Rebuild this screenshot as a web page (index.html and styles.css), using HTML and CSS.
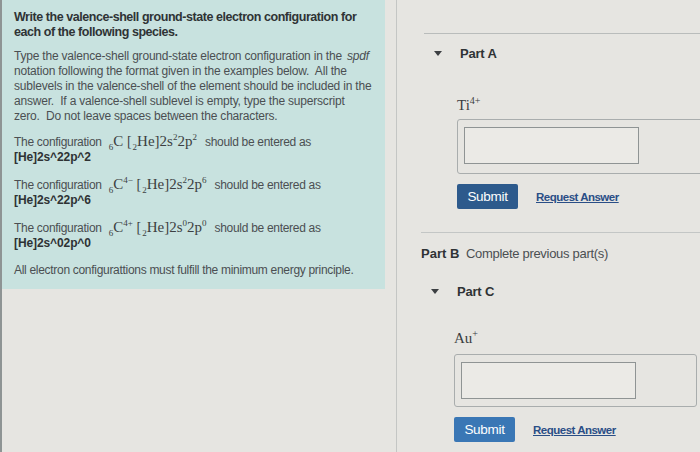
FILE: index.html
```html
<!DOCTYPE html>
<html lang="en">
<head>
    <meta charset="UTF-8">
    <title>Electron Configuration</title>
    <link rel="stylesheet" href="styles.css">
</head>
<body>
    <div class="page">
        <!-- left: instructions -->
        <div class="left-col">
            <div class="intro">
                <div class="intro-title">Write the valence-shell ground-state electron configuration for each of the following species.</div>
                <p class="intro-text">Type the valence-shell ground-state electron configuration in the <i>spdf</i><br>notation following the format given in the examples below.&nbsp; All the<br>sublevels in the valence-shell of the element should be included in the<br>answer.&nbsp; If a valence-shell sublevel is empty, type the superscript<br>zero.&nbsp; Do not leave spaces between the characters.</p>
                <p class="example">The configuration <span class="chem"><sub>6</sub>C <span class="br">[</span><sub>2</sub>He]2s<sup>2</sup>2p<sup>2</sup></span> should be entered as<br><b>[He]2s^22p^2</b></p>
                <p class="example">The configuration <span class="chem"><sub>6</sub>C<sup>4&minus;</sup> <span class="br">[</span><sub>2</sub>He]2s<sup>2</sup>2p<sup>6</sup></span> should be entered as<br><b>[He]2s^22p^6</b></p>
                <p class="example">The configuration <span class="chem"><sub>6</sub>C<sup>4+</sup> <span class="br">[</span><sub>2</sub>He]2s<sup>0</sup>2p<sup>0</sup></span> should be entered as<br><b>[He]2s^02p^0</b></p>
                <p class="intro-last">All electron configurattions must fulfill the minimum energy principle.</p>
            </div>
        </div>

        <!-- right: parts -->
        <div class="parts">
            <div class="part part-a">
                <div class="part-head"><span class="caret"></span>Part A</div>
                <div class="part-body">
                    <div class="species">Ti<sup>4+</sup></div>
                    <div class="answer-box"><div class="answer-input"></div></div>
                    <div class="actions">
                        <button class="submit dark">Submit</button>
                        <a class="request" href="#">Request Answer</a>
                    </div>
                </div>
            </div>
            <div class="part-b"><b>Part B</b> <span>Complete previous part(s)</span></div>
            <div class="part part-c">
                <div class="part-head"><span class="caret"></span>Part C</div>
                <div class="part-body">
                    <div class="species">Au<sup>+</sup></div>
                    <div class="answer-box"><div class="answer-input"></div></div>
                    <div class="actions">
                        <button class="submit">Submit</button>
                        <a class="request" href="#">Request Answer</a>
                    </div>
                </div>
            </div>
        </div>
    </div>
</body>
</html>
```

FILE: styles.css
```css
body {
    margin: 0;
    width: 700px;
    height: 452px;
    overflow: hidden;
    background: #e6e5e1;
    font-family: 'Liberation Sans', Arial, sans-serif;
    color: #3a3d3f;
}

.page {
    display: flex;
    height: 452px;
    border-left: 2px solid #8e9494;
    box-sizing: border-box;
}

/* 左侧说明 */
.left-col {
    width: 394px;
    border-right: 1px solid #c4c6c4;
    flex: none;
}

.intro {
    width: 383px;
    box-sizing: border-box;
    background: #c8e2df;
    padding: 10px 12px 11px;
}

.intro-title {
    font-weight: bold;
    font-size: 12.5px;
    letter-spacing: -0.45px;
    line-height: 15px;
    color: #2f3335;
    margin-bottom: 9px;
}

.intro p {
    margin: 0;
    font-size: 12px;
    letter-spacing: -0.3px;
    line-height: 15px;
    color: #4b4f52;
}

.intro-text {
    margin-bottom: 10px !important;
    letter-spacing: -0.2px !important;
    white-space: nowrap;
}

.intro-text i {
    margin-left: 2px;
}

.example {
    margin-bottom: 12px !important;
}

.example b {
    color: #2e3234;
    letter-spacing: -0.1px;
}

.chem {
    font-family: 'Liberation Serif', 'Times New Roman', serif;
    font-size: 15px;
    letter-spacing: 0;
    color: #3c3f42;
    margin: 0 5px 0 4px;
}

.chem sub, .chem sup {
    font-size: 9px;
    line-height: 0;
}

.br {
    font-size: 14px;
    margin-right: 1px;
}

.intro-last {
    margin-top: 2px !important;
}

/* 右侧题目 */
.parts {
    flex: 1;
    padding-left: 24px;
    padding-top: 33px;
}

.part-a {
    border-top: 1px solid #b9bcbb;
    margin-left: 3px;
}

.part-head {
    display: flex;
    align-items: center;
    font-weight: bold;
    font-size: 13px;
    letter-spacing: -0.2px;
    color: #2f3335;
    height: 38px;
}

.caret {
    width: 0;
    height: 0;
    border-left: 4px solid transparent;
    border-right: 4px solid transparent;
    border-top: 5px solid #3c3f42;
    margin: 0 18px 0 10px;
}

.part-body {
    padding-left: 33px;
}

.species {
    font-family: 'Liberation Serif', 'Times New Roman', serif;
    font-size: 15px;
    color: #3a3d40;
    margin-top: 23px;
    height: 20px;
}

.species sup {
    font-size: 10px;
}

.answer-box {
    margin-top: 4px;
    width: 250px;
    height: 55px;
    box-sizing: border-box;
    border: 1px solid #a9adad;
    border-radius: 3px;
    padding: 7px 0 0 6px;
}

.answer-input {
    width: 175px;
    height: 37px;
    box-sizing: border-box;
    border: 1px solid #8f9494;
    background: #ebeae6;
}

.actions {
    display: flex;
    align-items: center;
    margin-top: 10px;
}

.submit {
    width: 61px;
    height: 25px;
    border: none;
    border-radius: 2px;
    background: #3a77b5;
    color: #fff;
    font-family: 'Liberation Sans', Arial, sans-serif;
    font-size: 13.5px;
    letter-spacing: -0.3px;
    padding: 0;
}

.submit.dark {
    background: #2d5a8c;
}

.request {
    margin-left: 18px;
    font-size: 11.5px;
    font-weight: bold;
    letter-spacing: -0.5px;
    color: #2a4e86;
    text-decoration: underline;
}

.part-b {
    border-top: 1px solid #c3c6c5;
    margin-top: 23px;
    padding-top: 13px;
    font-size: 13px;
    color: #2f3335;
    height: 26px;
}

.part-b span {
    color: #4b4f52;
    letter-spacing: -0.3px;
    margin-left: 3px;
}

.part-c .part-head {
    height: 38px;
}

.part-c .species {
    margin-top: 18px;
}

.part-c .answer-box {
    width: 243px;
    height: 53px;
    margin-top: 6px;
}

.part-c .actions {
    margin-top: 10px;
}
```
